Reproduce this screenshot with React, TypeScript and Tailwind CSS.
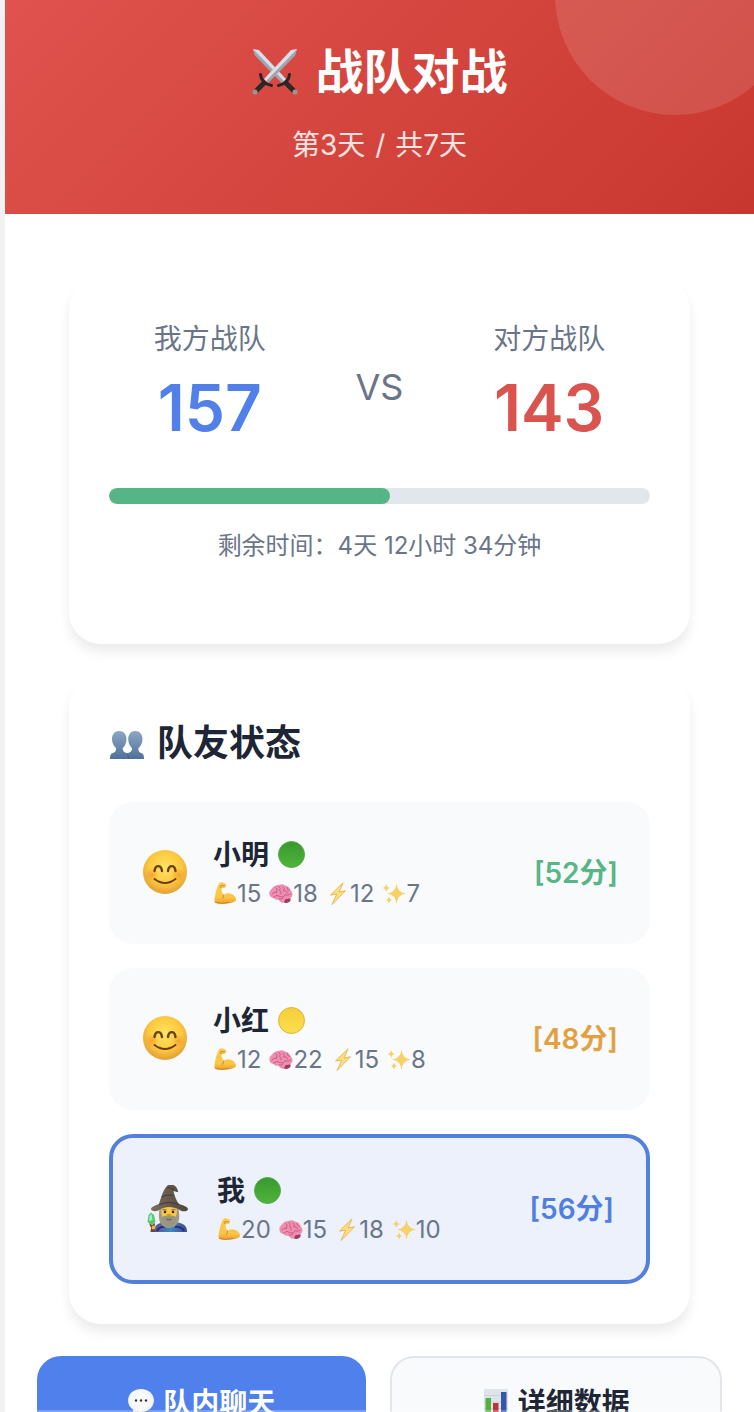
import type { ReactNode } from "react";

type IconProps = { className?: string };

const SwordsIcon = ({ className }: IconProps) => (
  <svg viewBox="0 0 48 48" className={className} aria-hidden="true">
    <defs>
      <linearGradient id="blade" x1="0" y1="1" x2="1" y2="0">
        <stop offset="0" stopColor="#7d8492" />
        <stop offset="0.5" stopColor="#dfe4ec" />
        <stop offset="1" stopColor="#8b92a1" />
      </linearGradient>
      <g id="sword">
        <path d="M2 1 L8 2 L35 31 L31 35 L4 7.5 Z" fill="url(#blade)" />
        <path d="M2 1 L33 33 L31 35 L4 7.5 Z" fill="#6f7786" opacity="0.55" />
        <path d="M33.500 33.500 L43 43" stroke="#2b2827" strokeWidth="5" />
        <path d="M38.500 26.500 Q37.500 35.500 27.500 37.500" stroke="#2b2524" strokeWidth="3" fill="none" strokeLinecap="round" />
        <circle cx="44" cy="44" r="2.500" fill="#9b9694" />
      </g>
    </defs>
    <use href="#sword" />
    <use href="#sword" transform="matrix(-1 0 0 1 48 0)" />
  </svg>
);

const PeopleIcon = ({ className }: IconProps) => (
  <svg viewBox="0 0 36 36" className={className} aria-hidden="true">
    <defs>
      <linearGradient id="people" x1="0" y1="0" x2="0" y2="1">
        <stop offset="0" stopColor="#8ba7c4" />
        <stop offset="1" stopColor="#4f7099" />
      </linearGradient>
    </defs>
    <path
      d="M10.2 6 C5.800 6 3 9.500 3 14 C3 18.500 5 21 7 23 C7.500 27 5 27.500 2.500 28.500 Q1 29.500 1 34 H35 Q35 29.500 33.500 28.500 C31 27.500 29 27 29.500 23 C31.500 21 33.500 18.500 33.500 14 C33.500 9.500 30.500 6 26.300 6 C22 6 19.200 9.500 19.200 14 C19.200 18.500 21 21 23 23 C23.200 26 21.500 27.300 18.300 28.300 C15 27.300 13.500 26 13.700 23 C15.700 21 17.500 18.500 17.500 14 C17.500 9.500 14.600 6 10.200 6 Z"
      fill="url(#people)"
    />
    <path d="M18.300 28.500 Q19.500 30 19.500 34" stroke="#3f5f89" strokeWidth="0.800" fill="none" />
  </svg>
);

const SmileIcon = ({ className }: IconProps) => (
  <svg viewBox="0 0 48 48" className={className} aria-hidden="true">
    <defs>
      <radialGradient id="face" cx="0.5" cy="0.4" r="0.62">
        <stop offset="0" stopColor="#ffe362" />
        <stop offset="0.6" stopColor="#fcc93f" />
        <stop offset="1" stopColor="#e09a35" />
      </radialGradient>
      <radialGradient id="cheek">
        <stop offset="0" stopColor="#f58a2c" stopOpacity="0.6" />
        <stop offset="1" stopColor="#f58a2c" stopOpacity="0" />
      </radialGradient>
    </defs>
    <circle cx="24" cy="23" r="22" fill="url(#face)" />
    <circle cx="10.5" cy="26" r="7" fill="url(#cheek)" />
    <circle cx="37.500" cy="26" r="7" fill="url(#cheek)" />
    <path d="M13.500 22 C14.300 15.500 20.200 15.500 21 22" stroke="#6a421a" strokeWidth="2.400" fill="none" strokeLinecap="round" />
    <path d="M27 22 C27.800 15.500 33.700 15.500 34.500 22" stroke="#6a421a" strokeWidth="2.400" fill="none" strokeLinecap="round" />
    <path d="M13.500 30 Q24 38 34.500 30" stroke="#6a3c15" strokeWidth="2" fill="none" strokeLinecap="round" />
  </svg>
);

const WizardIcon = ({ className }: IconProps) => (
  <svg viewBox="0 0 48 48" className={className} aria-hidden="true">
    <defs>
      <linearGradient id="hat" x1="0" y1="0" x2="1" y2="0">
        <stop offset="0" stopColor="#7b6d5e" />
        <stop offset="1" stopColor="#51463c" />
      </linearGradient>
      <linearGradient id="robe" x1="0" y1="0" x2="1" y2="0">
        <stop offset="0" stopColor="#5a4d9b" />
        <stop offset="0.5" stopColor="#3a8ac4" />
        <stop offset="1" stopColor="#3c4a94" />
      </linearGradient>
    </defs>
    <path d="M9 47 C8.500 41.500 12 38.500 17 37.500 L33 37.500 C39 38.500 42 41.500 42 47 Z" fill="url(#robe)" />
    <path d="M12 46 Q15 41 20 42 M39 46 Q36 41 30 42" stroke="#2f2f70" strokeWidth="2" fill="none" />
    <path d="M14.500 24 C13 33 14.500 38 17 40 C20 44 28 44 31 40 C34.500 37 35 32 33.500 24 Z" fill="#a09a83" />
    <path d="M16.500 22 H31.500 C32.500 29 31 36 24 36 C17.500 36 15.500 29 16.500 22 Z" fill="#f8c843" />
    <path d="M17 32 Q20.500 29.500 24 31 Q27.500 29.500 31 32 Q31 41 24 43 Q17.500 41 17 32 Z" fill="#969681" />
    <path d="M21.500 34 Q24 35.500 26.500 34" stroke="#87503e" strokeWidth="1.200" fill="none" />
    <ellipse cx="24" cy="30" rx="2" ry="1.300" fill="#d99725" />
    <circle cx="20" cy="27" r="1.300" fill="#37291c" />
    <circle cx="28" cy="27" r="1.300" fill="#37291c" />
    <path d="M17.500 24.500 L21.500 25 M26.500 25 L30.500 24.500" stroke="#8a8168" strokeWidth="1.300" />
    <path d="M6 24 C6 21.500 11 20.500 14 19 C16 13 17.500 5 23 0 C28 -2 33 2 33 7 C31.500 7.500 30 6 28.500 6 C29.500 11 31.500 16 34 19 C38 20.500 43 21.500 43 24 C43 27 36 27 34 24.500 C28 21 20 21 15 24.500 C12 27 6 26.500 6 24 Z" fill="url(#hat)" />
    <path d="M14 19.500 Q24 15.500 34 19.500 M17 12 Q22 9 28.500 10.500 M22 3 Q25 1.500 29 5" stroke="#473c32" strokeWidth="1.200" fill="none" />
    <path d="M4 38 L7 40 L10 38 L9.500 43 L10 47 H5.500 L6 43 Z" fill="#71452f" />
    <circle cx="8.500" cy="42.500" r="2" fill="#edb634" />
    <path d="M3.500 30 L6 27.500 L9 30 L10.500 37 L7 40 L2.500 37 Z" fill="#55c674" />
    <path d="M4.500 31 L6.500 29 L7.500 35 L4 36 Z" fill="#a7efb4" />
  </svg>
);

const MuscleIcon = ({ className }: IconProps) => (
  <svg viewBox="0 0 24 24" className={className} aria-hidden="true">
    <defs>
      <linearGradient id="arm" x1="0" y1="0" x2="0" y2="1">
        <stop offset="0" stopColor="#fbc94b" />
        <stop offset="0.700" stopColor="#fbc643" />
        <stop offset="1" stopColor="#e89a32" />
      </linearGradient>
    </defs>
    <path d="M6 1.500 Q8 -0.300 10.500 0.700 Q13.800 1.500 13 4 Q12.500 6.500 9.500 6 L8.300 6 Q8.500 10 10.500 13 Q13 10.500 17 11.500 Q23.300 13.500 23 18 Q22 20.500 16 21.300 Q8 23 2.500 21 Q0.800 20 1.800 15.500 Q3 7 6 1.500 Z" fill="url(#arm)" />
    <path d="M8 6 Q7 5 8 3.500 L11.500 4 M10.500 13 Q11 15 9.500 16.500 M2.500 20.500 Q8 22.300 16 20.500" stroke="#ca812b" strokeWidth="0.900" fill="none" strokeLinecap="round" />
  </svg>
);

const BrainIcon = ({ className }: IconProps) => (
  <svg viewBox="0 0 24 24" className={className} aria-hidden="true">
    <path d="M12 16 Q17 16 21 15.500 Q23 19 19 20.500 Q16 22 13 19 Z" fill="#9c3f63" />
    <path d="M0.500 12.500 Q-0.300 9 3 6.500 Q5 3 9.500 3 Q13 1.500 16 3.500 Q20 4 21.500 8 Q24.500 11 23 14.500 Q21 17.500 16.500 17 Q15 21.500 12.500 20.500 Q10.500 19.500 9.500 17.500 Q6 18.500 4.500 16 Q1 15.500 0.500 12.500 Z" fill="#ef8fb0" />
    <path d="M3 12 Q5 9 7.500 10.500 Q9 7 7 5.500 M10 4.500 Q12.500 6 10.500 8.500 Q13 9 12 12 M4.500 15 Q8 12 11 14.500 Q15 16 16 12.500 Q19 14.500 21.500 12 M14 5 Q16.500 6 14.500 9 Q18 8 18.500 11 M18 5.500 Q18 8 20.500 8.500 M10 17 Q12 18 14 16" stroke="#c85c84" strokeWidth="1" fill="none" strokeLinecap="round" />
  </svg>
);

const BoltIcon = ({ className }: IconProps) => (
  <svg viewBox="0 0 24 24" className={className} aria-hidden="true">
    <path d="M17 0.800 L4.500 13 L10.800 12.200 L6 22.500 L19.500 8.800 L13 10 Z" fill="#fde07e" stroke="#e9b65a" strokeWidth="1" strokeLinejoin="round" />
  </svg>
);

const SparklesIcon = ({ className }: IconProps) => (
  <svg viewBox="0 0 24 24" className={className} aria-hidden="true">
    <g fill="#f8d06a">
      <path d="M14.500 1.500 Q15.500 10.500 24 11.500 Q15.500 12.500 14.500 22 Q13.500 12.500 5 11.500 Q13.500 10.500 14.500 1.500 Z" />
      <path d="M4.200 2 Q4.800 5.400 8 6 Q4.800 6.600 4.200 10 Q3.600 6.600 0.500 6 Q3.600 5.400 4.200 2 Z" />
      <path d="M7 14.500 Q7.600 17.400 10 18 Q7.600 18.600 7 21.500 Q6.400 18.600 4 18 Q6.400 17.400 7 14.500 Z" />
    </g>
  </svg>
);

const StatusDot = ({ status, className }: IconProps & { status: "green" | "yellow" }) => (
  <svg viewBox="0 0 28 28" className={className} aria-hidden="true">
    <defs>
      <linearGradient id="dot-green" x1="0" y1="0" x2="0" y2="1">
        <stop offset="0" stopColor="#38992e" />
        <stop offset="1" stopColor="#4fb43b" />
      </linearGradient>
      <linearGradient id="dot-yellow" x1="0" y1="0" x2="0" y2="1">
        <stop offset="0" stopColor="#f5cf38" />
        <stop offset="1" stopColor="#fbdf4e" />
      </linearGradient>
    </defs>
    <circle
      cx="14.500"
      cy="13.500"
      r="13"
      fill={status === "green" ? "url(#dot-green)" : "url(#dot-yellow)"}
      stroke={status === "green" ? "#56a84a" : "#dbb13c"}
      strokeWidth="1"
    />
  </svg>
);

const ChatIcon = ({ className }: IconProps) => (
  <svg viewBox="0 0 28 28" className={className} aria-hidden="true">
    <defs>
      <radialGradient id="bubble" cx="0.500" cy="0.400" r="0.600">
        <stop offset="0" stopColor="#ffffff" />
        <stop offset="0.750" stopColor="#f4f4f4" />
        <stop offset="1" stopColor="#c6c8cc" />
      </radialGradient>
    </defs>
    <path d="M14 0 C21.500 0 27 5 27 11.500 C27 18 21.500 23 14 23 Q12 23 10 22.500 Q8 26 4.500 26.500 Q6.500 24 6 20.500 Q1 17 1 11.500 C1 5 6.500 0 14 0 Z" fill="url(#bubble)" />
    <circle cx="9" cy="11.500" r="1.200" fill="#333" />
    <circle cx="14" cy="11.500" r="1.200" fill="#333" />
    <circle cx="19" cy="11.500" r="1.200" fill="#333" />
  </svg>
);

const ChartIcon = ({ className }: IconProps) => (
  <svg viewBox="0 0 28 28" className={className} aria-hidden="true">
    <rect x="2" y="0" width="24" height="26" fill="#dde4ec" />
    <path d="M2 6.500 H26 M2 13 H26 M2 19.500 H26" stroke="#c3ced9" strokeWidth="0.800" />
    <rect x="3.500" y="9" width="5.500" height="16" fill="#55b03f" />
    <rect x="11" y="14" width="5.500" height="11" fill="#c03238" />
    <rect x="19" y="3" width="5.500" height="22" fill="#3457ac" />
  </svg>
);

type Member = {
  name: string;
  avatar: ReactNode;
  status: "green" | "yellow";
  stats: [number, number, number, number];
  score: number;
  scoreColor: string;
  isMe?: boolean;
};

const members: Member[] = [
  {
    name: "小明",
    avatar: <SmileIcon className="size-12 shrink-0" />,
    status: "green",
    stats: [15, 18, 12, 7],
    score: 52,
    scoreColor: "text-[#57b586]",
  },
  {
    name: "小红",
    avatar: <SmileIcon className="size-12 shrink-0" />,
    status: "yellow",
    stats: [12, 22, 15, 8],
    score: 48,
    scoreColor: "text-[#e3a040]",
  },
  {
    name: "我",
    avatar: <WizardIcon className="size-12 shrink-0" />,
    status: "green",
    stats: [20, 15, 18, 10],
    score: 56,
    scoreColor: "text-[#4f7fe0]",
    isMe: true,
  },
];

const statIcons = [MuscleIcon, BrainIcon, BoltIcon, SparklesIcon];

const MemberRow = ({ member }: { member: Member }) => (
  <li
    className={
      member.isMe
        ? "flex items-center gap-6 rounded-3xl border-4 border-[#5280dc] bg-[#ecf1fc] p-8"
        : "flex items-center gap-6 rounded-3xl bg-[#f8fafc] p-8"
    }
  >
    {member.avatar}
    <div className="flex-1">
      <div className="flex items-center gap-2 text-[28px] leading-[42px] font-bold text-[#1e2635]">
        {member.name}
        <StatusDot status={member.status} className="size-7" />
      </div>
      <div className="flex gap-2 text-2xl leading-9 text-[#6b7588]">
        {member.stats.map((value, i) => {
          const Icon = statIcons[i];
          return (
            <span key={i} className="flex items-center">
              <Icon className="size-6" />
              {value}
            </span>
          );
        })}
      </div>
    </div>
    <div className={`text-[28px] leading-[42px] font-semibold ${member.scoreColor}`}>[{member.score}分]</div>
  </li>
);

const TeamScore = ({ label, score, color }: { label: string; score: number; color: string }) => (
  <div className="text-center">
    <div className="text-[28px] leading-[42px] text-[#6b7588]">{label}</div>
    <div className={`text-[64px] leading-[96px] font-semibold ${color}`}>{score}</div>
  </div>
);

const App = () => {
  return (
    <div className="relative h-screen overflow-hidden border-l-[5px] border-[#f2f2f3] bg-white font-['Inter','Noto_Sans_CJK_SC',sans-serif]">
      {/* Header */}
      <header className="relative overflow-hidden bg-linear-135 from-[#e0524d] to-[#c8372f] pt-10 pb-12 text-center text-white">
        <div className="absolute -top-[125px] -right-[41px] size-60 rounded-full bg-white/12" />
        <h1 className="flex items-center justify-center gap-4 text-5xl leading-[64px] font-bold">
          <SwordsIcon className="size-12" />
          战队对战
        </h1>
        <p className="mt-5 text-[28px] leading-[42px] text-white/85">
          第3天 <span className="mx-0.5">/</span> 共7天
        </p>
      </header>

      <main className="px-8 pt-16">
        <div className="space-y-8 px-8">
          {/* Score board */}
          <section className="rounded-4xl bg-white px-10 pt-10 pb-20 shadow-[0_8px_12px_rgba(0,0,0,0.08)]">
            <div className="flex items-center justify-around">
              <TeamScore label="我方战队" score={157} color="text-[#5181e8]" />
              <div className="text-4xl text-[#6b7588]">VS</div>
              <TeamScore label="对方战队" score={143} color="text-[#d9544f]" />
            </div>
            <div
              role="progressbar"
              aria-label="战队进度"
              aria-valuenow={52}
              className="mt-8 h-4 overflow-hidden rounded-full bg-[#e2e7ee]"
            >
              <div className="h-full rounded-full bg-[#56b586]" style={{ width: "52%" }} />
            </div>
            <p className="mt-6 text-center text-2xl leading-9 text-[#6b7588]">剩余时间：4天 12小时 34分钟</p>
          </section>

          {/* Teammates */}
          <section className="rounded-4xl bg-white p-10 shadow-[0_8px_12px_rgba(0,0,0,0.08)]">
            <h2 className="flex items-center gap-3 text-4xl leading-[54px] font-bold text-[#1e2635]">
              <PeopleIcon className="size-9" />
              队友状态
            </h2>
            <ul className="mt-8 space-y-6">
              {members.map((member) => (
                <MemberRow key={member.name} member={member} />
              ))}
            </ul>
          </section>
        </div>

        {/* Actions */}
        <div className="mt-8 flex gap-6 text-[28px] leading-[42px] font-bold">
          <button type="button" className="flex flex-1 items-center justify-center gap-2 rounded-3xl bg-[#4f80ec] py-6 text-white">
            <ChatIcon className="size-7" />
            队内聊天
          </button>
          <button
            type="button"
            className="flex flex-1 items-center justify-center gap-2 rounded-3xl border-2 border-[#e2e6ec] bg-[#f8fafc] py-6 text-[#1e2635]"
          >
            <ChartIcon className="size-7" />
            详细数据
          </button>
        </div>
      </main>

      {/* Translucent edge of the bottom bar */}
      <div className="absolute inset-x-0 bottom-0 h-0.5 bg-white/25" />
    </div>
  );
};

export default App;
